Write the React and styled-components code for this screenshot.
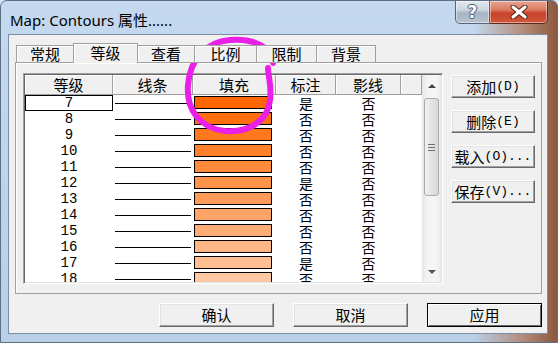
import React from "react";
import styled, { createGlobalStyle } from "styled-components";

const CJK = `"Noto Sans CJK SC", "Noto Sans", sans-serif`;
const MONO = `"Liberation Mono", "Noto Sans CJK SC", monospace`;

const GlobalStyle = createGlobalStyle`
  html, body { margin: 0; padding: 0; }
  body { background: #d6e3f1; overflow: hidden; }
  * { box-sizing: border-box; }
`;

const levels = [7, 8, 9, 10, 11, 12, 13, 14, 15, 16, 17, 18];
const labelled = [7, 12, 17];

const fillColor = (i) => {
  const t = i / (levels.length - 1);
  const g = Math.round(102 + 98 * t);
  const b = Math.round(162 * t);
  return `rgb(255, ${g}, ${b})`;
};

const Window = styled.div`
  position: relative;
  width: 558px;
  height: 343px;
  display: flex;
  flex-direction: column;
  border: 1px solid #5d6f85;
  border-radius: 7px 7px 0 0;
  overflow: hidden;
  background:
    linear-gradient(90deg, rgba(170, 112, 84, 0) 85%, rgba(176, 120, 92, 0.8) 94%, #8c583e 100%),
    linear-gradient(180deg, #c4d9ef 0%, #bdd3eb 60%, #b9d0e9 100%);
`;

const TitleBar = styled.div`
  height: 33px;
  display: flex;
  align-items: flex-start;
  padding-left: 9px;
`;

const Title = styled.div`
  margin-top: 9px;
  font-family: "Noto Sans", "Noto Sans CJK SC", sans-serif;
  font-size: 15px;
  line-height: 20px;
  color: #000;
`;

const CaptionButtons = styled.div`
  display: flex;
  margin-left: auto;
  margin-right: 9px;
  margin-top: -1px;
`;

const CaptionButton = styled.div`
  width: ${(p) => (p.$close ? 58 : 35)}px;
  height: 24px;
  display: flex;
  align-items: center;
  justify-content: center;
  border: 1px solid ${(p) => (p.$close ? "#5e2a1c" : "#56667a")};
  border-left-width: ${(p) => (p.$close ? 0 : 1)}px;
  border-radius: ${(p) => (p.$close ? "0 0 5px 0" : "0 0 0 5px")};
  background: ${(p) =>
    p.$close
      ? "linear-gradient(180deg, #e9a593 0%, #dc7a62 40%, #c7442a 55%, #d2573a 100%)"
      : "linear-gradient(180deg, #e4e9ef 0%, #ccd5df 40%, #a8b4c2 55%, #b8c3cf 100%)"};
  box-shadow: inset 0 0 0 1px rgba(255, 255, 255, 0.45);
`;

const HelpGlyph = styled.span`
  font-family: "DejaVu Sans", sans-serif;
  font-weight: bold;
  font-size: 17px;
  line-height: 20px;
  color: #fff;
  text-shadow: -1px 0 #4b5a6a, 1px 0 #4b5a6a, 0 -1px #4b5a6a, 0 1px #4b5a6a;
`;

const Client = styled.div`
  margin: 0 9px 0 7px;
  height: 300px;
  flex: none;
  border: 1px solid #7b8ea5;
  background: #f0f0f0;
  padding: 8px 5px 0 6px;
  display: flex;
  flex-direction: column;
`;

const TabStrip = styled.div`
  display: flex;
  align-items: flex-end;
  height: 20px;
  margin-left: 1px;
  margin-bottom: -1px;
  position: relative;
  z-index: 1;
`;

const Tab = styled.div`
  width: ${(p) => p.$w}px;
  height: ${(p) => (p.$active ? 20 : 18)}px;
  border: 1px solid #a0a0a0;
  border-bottom: ${(p) => (p.$active ? "none" : "1px solid #a0a0a0")};
  box-shadow: inset 1px 1px 0 #fff;
  background: #f0f0f0;
  font-family: ${CJK};
  font-size: 15px;
  line-height: ${(p) => (p.$active ? 17 : 15)}px;
  text-align: center;
  color: #000;
  margin-left: ${(p) => (p.$first ? 0 : -1)}px;
`;

const Panel = styled.div`
  height: 232px;
  border: 1px solid #a0a0a0;
  box-shadow: inset 1px 1px 0 #fff;
  background: #f0f0f0;
  display: flex;
  align-items: flex-start;
  padding: 10px 6px 0 7px;
`;

const List = styled.div`
  width: 420px;
  height: 211px;
  display: flex;
  border: 1px solid;
  border-color: #a0a0a0 #fff #fff #a0a0a0;
  box-shadow: inset 1px 1px 0 #696969, inset -1px -1px 0 #e3e3e3;
  padding: 1px;
`;

const ListBody = styled.div`
  flex: 1;
  overflow: hidden;
  background: #fff;
`;

const HeaderRow = styled.div`
  display: flex;
  height: 20px;
`;

const HeaderCell = styled.div`
  width: ${(p) => (p.$w ? `${p.$w}px` : "auto")};
  flex: ${(p) => (p.$w ? "none" : 1)};
  background: #f0f0f0;
  border-right: 1px solid #a0a0a0;
  border-bottom: 1px solid #a0a0a0;
  box-shadow: inset 1px 1px 0 #fff;
  font-family: ${CJK};
  font-size: 15px;
  line-height: 19px;
  text-align: center;
  color: #000;
`;

const Row = styled.div`
  display: flex;
  height: 16px;
`;

const LevelCell = styled.div`
  width: 88px;
  height: 16px;
  font-family: ${MONO};
  font-size: 14px;
  line-height: 14px;
  text-align: center;
  color: #000;
  border: 1px solid ${(p) => (p.$focused ? "#000" : "transparent")};
`;

const LineCell = styled.div`
  width: 80px;
  display: flex;
  align-items: center;
  padding: 0 2px;
`;

const Stroke = styled.span`
  flex: 1;
  height: 1px;
  background: #000;
`;

const FillCell = styled.div`
  width: 83px;
  padding: 1px 4px 0 1px;
`;

const Swatch = styled.div`
  height: 13px;
  border: 1px solid #000;
  background: ${(p) => p.$color};
`;

const TextCell = styled.div`
  width: ${(p) => p.$w}px;
  font-family: ${CJK};
  font-size: 14px;
  line-height: 16px;
  text-align: center;
  color: #000;
`;

const Scrollbar = styled.div`
  width: 19px;
  display: flex;
  flex-direction: column;
  background: linear-gradient(90deg, #e6e6e6 0%, #f3f3f3 25%, #f5f5f5 75%, #e9e9e9 100%);
`;

const ArrowButton = styled.div`
  height: ${(p) => (p.$down ? 20 : 21)}px;
  display: flex;
  align-items: center;
  justify-content: center;
`;

const Arrow = styled.span`
  width: 0;
  height: 0;
  border-left: 4px solid transparent;
  border-right: 4px solid transparent;
  ${(p) =>
    p.$down
      ? "border-top: 4px solid #555;"
      : "border-bottom: 4px solid #444;"}
`;

const Track = styled.div`
  flex: 1;
  padding: 2px 2px 0;
`;

const Thumb = styled.div`
  height: 98px;
  border: 1px solid #a9a9a9;
  border-radius: 3px;
  background: linear-gradient(90deg, #f2f2f2 0%, #e4e4e4 50%, #d7d7d7 100%);
  display: flex;
  flex-direction: column;
  align-items: center;
  justify-content: center;
  gap: 2px;
`;

const Grip = styled.span`
  width: 7px;
  height: 1px;
  background: #6f6f6f;
`;

const SideButtons = styled.div`
  display: flex;
  flex-direction: column;
  gap: 12px;
  margin-left: 8px;
  margin-top: 2px;
`;

const Button = styled.div`
  width: ${(p) => p.$w}px;
  height: ${(p) => p.$h}px;
  display: flex;
  align-items: center;
  justify-content: center;
  background: #f0f0f0;
  border: 1px solid;
  border-color: ${(p) => (p.$default ? "#000" : "#fff #696969 #696969 #fff")};
  box-shadow: ${(p) =>
    p.$default
      ? "inset 1px 1px 0 #fff, inset -1px -1px 0 #696969"
      : "inset -1px -1px 0 #a0a0a0, inset 1px 1px 0 #e3e3e3"};
  font-family: ${CJK};
  font-size: 15px;
  line-height: 18px;
  color: #000;
`;

const Key = styled.span`
  font-family: "Liberation Mono", monospace;
  font-size: 13px;
`;

const DialogButtons = styled.div`
  display: flex;
  justify-content: flex-end;
  gap: 19px;
  margin-top: 9px;
`;

const Overlay = styled.svg`
  position: absolute;
  left: -1px;
  top: -1px;
  pointer-events: none;
`;

const tabs = [
  ["常规", 58],
  ["等级", 65],
  ["查看", 58],
  ["比例", 63],
  ["限制", 61],
  ["背景", 60],
];

export default function App() {
  return (
    <>
      <GlobalStyle />
      <Window>
        <TitleBar>
          <Title>Map: Contours 属性......</Title>
          <CaptionButtons>
            <CaptionButton>
              <HelpGlyph>?</HelpGlyph>
            </CaptionButton>
            <CaptionButton $close>
              <svg width="20" height="14" viewBox="0 0 20 14">
                <path d="M4 2 L16 12 M16 2 L4 12" stroke="#5a2418" strokeWidth="5" strokeLinecap="round" />
                <path d="M4 2 L16 12 M16 2 L4 12" stroke="#fff" strokeWidth="3" strokeLinecap="round" />
              </svg>
            </CaptionButton>
          </CaptionButtons>
        </TitleBar>
        <Client>
          <TabStrip>
            {tabs.map(([name, w], i) => (
              <Tab key={name} $w={w} $first={i === 0} $active={i === 1}>
                {name}
              </Tab>
            ))}
          </TabStrip>
          <Panel>
            <List>
              <ListBody>
                <HeaderRow>
                  <HeaderCell $w={88}>等级</HeaderCell>
                  <HeaderCell $w={80}>线条</HeaderCell>
                  <HeaderCell $w={83}>填充</HeaderCell>
                  <HeaderCell $w={60}>标注</HeaderCell>
                  <HeaderCell $w={65}>影线</HeaderCell>
                  <HeaderCell />
                </HeaderRow>
                {levels.map((lv, i) => (
                  <Row key={lv}>
                    <LevelCell $focused={i === 0}>{lv}</LevelCell>
                    <LineCell>
                      <Stroke />
                    </LineCell>
                    <FillCell>
                      <Swatch $color={fillColor(i)} />
                    </FillCell>
                    <TextCell $w={60}>{labelled.includes(lv) ? "是" : "否"}</TextCell>
                    <TextCell $w={65}>否</TextCell>
                  </Row>
                ))}
              </ListBody>
              <Scrollbar>
                <ArrowButton>
                  <Arrow />
                </ArrowButton>
                <Track>
                  <Thumb>
                    <Grip />
                    <Grip />
                    <Grip />
                  </Thumb>
                </Track>
                <ArrowButton $down>
                  <Arrow $down />
                </ArrowButton>
              </Scrollbar>
            </List>
            <SideButtons>
              <Button $w={84} $h={23}>
                添加<Key>(D)</Key>
              </Button>
              <Button $w={84} $h={23}>
                删除<Key>(E)</Key>
              </Button>
              <Button $w={84} $h={23}>
                载入<Key>(O)...</Key>
              </Button>
              <Button $w={84} $h={23}>
                保存<Key>(V)...</Key>
              </Button>
            </SideButtons>
          </Panel>
          <DialogButtons>
            <Button $w={115} $h={24}>确认</Button>
            <Button $w={115} $h={24}>取消</Button>
            <Button $w={115} $h={24} $default>应用</Button>
          </DialogButtons>
        </Client>
        <Overlay width="558" height="343" viewBox="0 0 558 343">
          <path
            d="M273 63 C271 46 252 38 230 40 C205 42 190 60 188 85 C186 110 200 128 225 131 C250 133 268 120 270 100 C272 86 268 76 268 68"
            fill="none"
            stroke="#ea1fe8"
            strokeWidth="6"
            strokeLinecap="round"
          />
        </Overlay>
      </Window>
    </>
  );
}
